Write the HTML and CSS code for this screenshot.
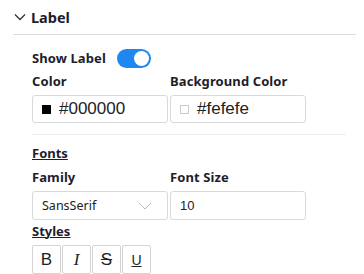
FILE: index.html
```html
<!DOCTYPE html>
<html>
<head>
<meta charset="utf-8">
<link rel="stylesheet" href="styles.css">
</head>
<body>
<div class="panel">
  <div class="header">
    <svg class="chev" width="12" height="8" viewBox="0 0 12 8"><path d="M1 1.5 L6 6.5 L11 1.5" fill="none" stroke="#333" stroke-width="1.3"/></svg>
    <span class="title">Label</span>
  </div>
  <div class="body">
    <div class="row-toggle">
      <span class="lbl">Show Label</span>
      <span class="toggle"><span class="knob"></span></span>
    </div>
    <div class="grid">
      <div class="field">
        <div class="lbl">Color</div>
        <div class="input"><span class="swatch black"></span>#000000</div>
      </div>
      <div class="field">
        <div class="lbl">Background Color</div>
        <div class="input"><span class="swatch light"></span>#fefefe</div>
      </div>
    </div>
    <div class="sep"></div>
    <div class="sub-row"><span class="sub">Fonts</span></div>
    <div class="grid">
      <div class="field">
        <div class="lbl">Family</div>
        <div class="input select"><span>SansSerif</span>
          <svg width="14" height="8" viewBox="0 0 14 8"><path d="M1 1 L7 7 L13 1" fill="none" stroke="#bbb" stroke-width="1"/></svg>
        </div>
      </div>
      <div class="field">
        <div class="lbl">Font Size</div>
        <div class="input small">10</div>
      </div>
    </div>
    <div class="sub-row styles-h"><span class="sub">Styles</span></div>
    <div class="btns">
      <span class="btn b">B</span>
      <span class="btn i">I</span>
      <span class="btn s">S</span>
      <span class="btn u">U</span>
    </div>
  </div>
</div>
</body>
</html>
```
FILE: styles.css
```css
html, body { margin: 0; padding: 0; background: #fff; }
body { font-family: "Noto Sans", "Lato", sans-serif; color: #1d1d2b; }
.panel { width: 364px; }
.header { display: flex; align-items: center; height: 35px; margin: 0 8px 0 13px; border-bottom: 1px solid #dcdcdc; box-sizing: border-box; }
.chev { margin-left: 1px; margin-right: 5px; }
.title { font-weight: 700; font-size: 14.5px; }
.body { padding: 13px 14px 0 32px; }
.row-toggle { display: flex; align-items: center; height: 20px; }
.lbl { font-weight: 700; font-size: 13px; letter-spacing: 0.1px; }
.toggle { margin-left: 11px; width: 34px; height: 19px; border-radius: 10px; background: #1e87f0; position: relative; display: inline-block; }
.knob { position: absolute; right: 2px; top: 2px; width: 15px; height: 15px; border-radius: 50%; background: #fff; }
.grid { display: grid; grid-template-columns: 136px 136px; column-gap: 2px; }
.field .lbl { height: 19px; line-height: 19px; margin-top: 4px; margin-bottom: 4px; }
.input { height: 28px; border: 1px solid #d9d9d9; border-radius: 3px; box-sizing: border-box; display: flex; align-items: center; padding-left: 9px; font-family: "Liberation Sans", sans-serif; font-size: 17px; color: #222; }
.swatch { width: 9px; height: 9px; margin-right: 8px; box-sizing: border-box; }
.black { background: #000; }
.light { border: 1px solid #ccc; background: #fefefe; }
.sep { height: 1px; background: #ececec; margin: 11px 4px 7px 0; }
.sub-row { display: flex; height: 22px; align-items: center; }
.sub { font-weight: 700; font-size: 13px; text-decoration: underline; line-height: 19px; }
.select { justify-content: space-between; padding-right: 15px; font-family: "Noto Sans", sans-serif; font-size: 12.5px; height: 29px; }
.small { font-size: 13px; height: 29px; }
.styles-h { height: 20px; margin-top: 1px; }
.btns { display: flex; gap: 1px; margin-top: 4px; }
.btn { width: 29px; height: 29px; border: 1px solid #d4d4d4; border-radius: 2px; box-sizing: border-box; display: flex; align-items: center; justify-content: center; font-family: "Liberation Sans", sans-serif; font-size: 17px; color: #222; }
.i { font-style: italic; font-family: "Liberation Serif", serif; }
.s { text-decoration: line-through; }
.u { text-decoration: underline; font-size: 14px; }
```
